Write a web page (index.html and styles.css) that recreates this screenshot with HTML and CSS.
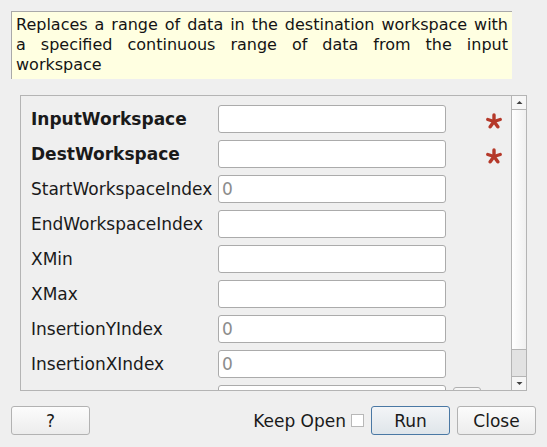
FILE: index.html
```
<!DOCTYPE html>
<html>
<head>
<meta charset="utf-8">
<link rel="stylesheet" href="styles.css">
</head>
<body>
<div class="dialog">
  <div class="desc">Replaces a range of data in the destination workspace with a specified continuous range of data from the input workspace</div>
  <div class="scrollarea">
    <div class="content">
      <div class="row"><span class="label bold">InputWorkspace</span><span class="field"></span><span class="star"><svg width="16" height="16" viewBox="0 0 16 16"><g stroke="#b5392a" stroke-width="3.4" stroke-linecap="round"><line x1="8" y1="8.5" x2="8" y2="2"/><line x1="8" y1="8.5" x2="14.2" y2="6.5"/><line x1="8" y1="8.5" x2="1.8" y2="6.5"/><line x1="8" y1="8.5" x2="11.8" y2="13.8"/><line x1="8" y1="8.5" x2="4.2" y2="13.8"/></g></svg></span></div>
      <div class="row"><span class="label bold">DestWorkspace</span><span class="field"></span><span class="star"><svg width="16" height="16" viewBox="0 0 16 16"><g stroke="#b5392a" stroke-width="3.4" stroke-linecap="round"><line x1="8" y1="8.5" x2="8" y2="2"/><line x1="8" y1="8.5" x2="14.2" y2="6.5"/><line x1="8" y1="8.5" x2="1.8" y2="6.5"/><line x1="8" y1="8.5" x2="11.8" y2="13.8"/><line x1="8" y1="8.5" x2="4.2" y2="13.8"/></g></svg></span></div>
      <div class="row"><span class="label">StartWorkspaceIndex</span><span class="field"><span class="ph">0</span></span></div>
      <div class="row"><span class="label">EndWorkspaceIndex</span><span class="field"></span></div>
      <div class="row"><span class="label">XMin</span><span class="field"></span></div>
      <div class="row"><span class="label">XMax</span><span class="field"></span></div>
      <div class="row"><span class="label">InsertionYIndex</span><span class="field"><span class="ph">0</span></span></div>
      <div class="row"><span class="label">InsertionXIndex</span><span class="field"><span class="ph">0</span></span></div>
      <div class="row partial"><span class="label"></span><span class="field"></span><span class="minibtn"></span></div>
    </div>
    <div class="vscroll">
      <div class="sbtn up"><svg width="13" height="13" viewBox="0 0 13 13"><path d="M3.5 8 L6.5 5 L9.5 8 Z" fill="#404040"/></svg></div>
      <div class="track"></div>
      <div class="handle"></div>
      <div class="sbtn down"><svg width="13" height="13" viewBox="0 0 13 13"><path d="M3.5 5 L6.5 8 L9.5 5 Z" fill="#404040"/></svg></div>
    </div>
  </div>
  <div class="buttons">
    <div class="btn help">?</div>
    <div class="spacer"></div>
    <span class="keep">Keep Open</span>
    <span class="check"></span>
    <div class="btn run">Run</div>
    <div class="btn close">Close</div>
  </div>
</div>
</body>
</html>
```
FILE: styles.css
```
html, body {
  margin: 0;
  padding: 0;
  background: #efefef;
  font-family: "DejaVu Sans", sans-serif;
  font-size: 17px;
  color: #1a1a1a;
}
.dialog {
  width: 547px;
  height: 447px;
  padding: 11px 0 0 11px;
  box-sizing: border-box;
  display: flex;
  flex-direction: column;
}
.desc {
  width: 501px;
  height: 68px;
  box-sizing: border-box;
  background: #ffffe1;
  border-top: 1px solid #a9a9a9;
  border-left: 1px solid #a9a9a9;
  padding: 3px 4px 0 4px;
  font-size: 16px;
  line-height: 20px;
  text-align: justify;
  word-spacing: 1px;
  color: #141414;
}
.scrollarea {
  margin-top: 16px;
  margin-left: 9px;
  width: 507px;
  height: 296px;
  box-sizing: border-box;
  border: 1px solid #b4b4b4;
  display: flex;
  overflow: hidden;
}
.content {
  flex: 1;
  padding: 9px 0 0 10px;
  display: flex;
  flex-direction: column;
  gap: 7px;
  overflow: hidden;
}
.row {
  display: flex;
  align-items: center;
  height: 28px;
  flex-shrink: 0;
}
.label {
  width: 187px;
  flex-shrink: 0;
  white-space: nowrap;
}
.bold { font-weight: bold; }
.field {
  width: 228px;
  height: 28px;
  box-sizing: border-box;
  background: #fff;
  border: 1px solid #ababab;
  border-radius: 3px;
  display: flex;
  align-items: center;
  padding-left: 3px;
}
.ph { color: #8c8c8c; }
.star {
  margin-left: 40px;
  display: flex;
  margin-top: 3px;
}
.partial { align-items: flex-start; }
.minibtn {
  margin-left: 7px;
  margin-top: 2px;
  width: 28px;
  height: 28px;
  box-sizing: border-box;
  border: 1px solid #b0b0b0;
  border-radius: 3px;
  background: #f6f6f6;
}
.vscroll {
  width: 14px;
  border-left: 1px solid #b4b4b4;
  display: flex;
  flex-direction: column;
  background: #fafafa;
}
.sbtn {
  height: 13px;
  display: flex;
  align-items: center;
  justify-content: center;
  background: #f6f6f6;
}
.up { border-bottom: 1px solid #b4b4b4; }
.down { border-top: 1px solid #b4b4b4; }
.track {
  flex: 1;
  background: linear-gradient(to right, #ffffff, #f0f0f0);
}
.handle {
  height: 26px;
  background: #e2e2e2;
  border-top: 1px solid #b4b4b4;
}
.buttons {
  margin-top: 15px;
  width: 525px;
  height: 29px;
  display: flex;
  align-items: center;
}
.btn {
  height: 29px;
  width: 79px;
  box-sizing: border-box;
  border: 1px solid #b2b2b2;
  border-radius: 3px;
  background: linear-gradient(#fcfcfc, #ececec);
  display: flex;
  align-items: center;
  justify-content: center;
}
.spacer { flex: 1; }
.keep { margin-right: 5px; }
.check {
  width: 13px;
  height: 13px;
  box-sizing: border-box;
  border: 1px solid #b8b8b8;
  background: #fff;
  margin-right: 7px;
}
.run {
  border-color: #4a78a4;
  background: linear-gradient(#f3f5f7, #dfe5ea);
  margin-right: 7px;
}
```
